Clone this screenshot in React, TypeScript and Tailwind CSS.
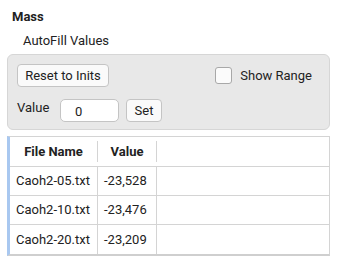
import React from "react";

const rows = [
  { file: "Caoh2-05.txt", value: "-23,528" },
  { file: "Caoh2-10.txt", value: "-23,476" },
  { file: "Caoh2-20.txt", value: "-23,209" },
];

export default function App() {
  return (
    <div className="w-[338px] h-[259px] bg-white text-[13px] text-[#222] font-['Roboto',sans-serif] overflow-hidden">
      <div className="pl-[12px] pt-[9px] leading-[16px] font-bold">Mass</div>
      <div className="pl-[23px] mt-[8px] leading-[16px]">AutoFill Values</div>

      {/* controls panel */}
      <div className="ml-[7px] mt-[5px] w-[323px] h-[76px] rounded-[6px] border border-[#d6d6d6] bg-[#e8e8e8] px-[9px] pt-[9px]">
        <div className="flex items-center">
          <button className="h-[23px] w-[92px] rounded-[4px] border border-[#c4c4c4] bg-[#fafafa] leading-[21px]">
            Reset to Inits
          </button>
          <div className="ml-auto mr-[8px] flex items-center gap-[8px]">
            <span className="block h-[17px] w-[17px] rounded-[3px] border border-[#a8a8a8] bg-[#fbfbfb]" />
            <span>Show Range</span>
          </div>
        </div>
        <div className="mt-[12px] flex items-center">
          <span className="w-[43px] -mt-[6px]">Value</span>
          <div className="h-[23px] w-[59px] rounded-[5px] border border-[#c4c4c4] bg-white pl-[14px] leading-[23px]">
            0
          </div>
          <button className="ml-[7px] h-[23px] w-[36px] rounded-[4px] border border-[#c4c4c4] bg-[#fafafa] leading-[21px]">
            Set
          </button>
        </div>
      </div>

      {/* table */}
      <div className="ml-[7px] mt-[6px] w-[323px] border-r border-t border-[#d4d4d4] border-b-[2px] border-b-[#cfcfcf] border-l-[3px] border-l-[#a9c8f0]">
        <div className="grid grid-cols-[88px_59px_1fr] h-[30px] border-b border-[#d4d4d4]">
          <div className="flex items-center justify-center font-bold border-r border-[#d4d4d4] my-[4px]">File Name</div>
          <div className="flex items-center justify-center font-bold border-r border-[#d4d4d4] my-[4px]">Value</div>
          <div />
        </div>
        {rows.map((r, i) => (
          <div
            key={r.file}
            className={`grid grid-cols-[88px_59px_1fr] h-[29px] ${i < rows.length - 1 ? "border-b border-[#d4d4d4]" : ""}`}
          >
            <div className="flex items-center pl-[6px] border-r border-[#d4d4d4]">{r.file}</div>
            <div className="flex items-center pl-[6px] border-r border-[#d4d4d4]">{r.value}</div>
            <div />
          </div>
        ))}
      </div>
    </div>
  );
}
